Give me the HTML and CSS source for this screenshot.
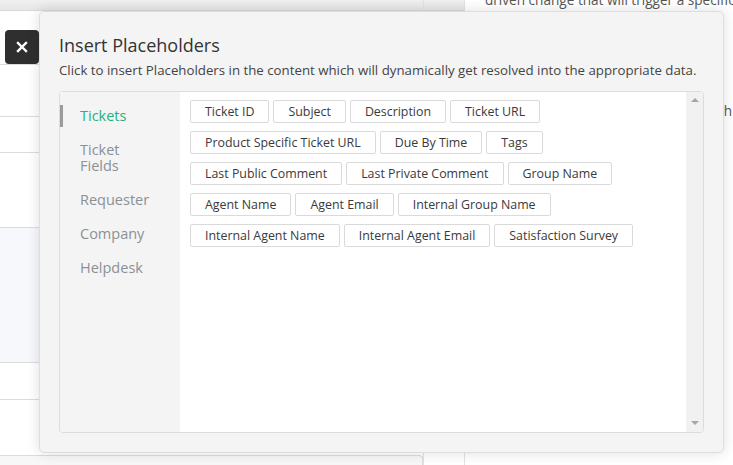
FILE: index.html
```html
<!DOCTYPE html>
<html>
<head>
<meta charset="utf-8">
<link rel="stylesheet" href="styles.css">
</head>
<body>
<div class="page">
  <div class="col-left">
    <div class="topband"></div>
    <div class="row r1"></div>
    <div class="row r2"></div>
    <div class="row r3"></div>
    <div class="row r4"></div>
    <div class="row r5 tinted"></div>
    <div class="row r6"></div>
    <div class="row r7"></div>
    <div class="bottom-box"></div>
  </div>
  <div class="col-mid">
    <div class="topband"></div>
  </div>
  <div class="col-right">
    <p class="bg-text first">driven change that will trigger a specific</p>
    <p class="bg-text second">with th</p>
  </div>
</div>

<button class="close-btn" aria-label="Close">
  <svg width="12" height="12" viewBox="0 0 12 12"><path d="M2 2 L10 10 M10 2 L2 10" stroke="#fff" stroke-width="2.4" stroke-linecap="square"/></svg>
</button>

<div class="modal">
  <h2 class="modal-title">Insert Placeholders</h2>
  <p class="modal-sub">Click to insert Placeholders in the content which will dynamically get resolved into the appropriate data.</p>
  <div class="panel">
    <ul class="tabs">
      <li class="tab active">Tickets</li>
      <li class="tab">Ticket Fields</li>
      <li class="tab">Requester</li>
      <li class="tab">Company</li>
      <li class="tab">Helpdesk</li>
    </ul>
    <div class="content">
      <div class="btn-row">
        <span class="ph">Ticket ID</span><span class="ph">Subject</span><span class="ph">Description</span><span class="ph">Ticket URL</span>
      </div>
      <div class="btn-row">
        <span class="ph">Product Specific Ticket URL</span><span class="ph">Due By Time</span><span class="ph">Tags</span>
      </div>
      <div class="btn-row">
        <span class="ph">Last Public Comment</span><span class="ph">Last Private Comment</span><span class="ph">Group Name</span>
      </div>
      <div class="btn-row">
        <span class="ph">Agent Name</span><span class="ph">Agent Email</span><span class="ph">Internal Group Name</span>
      </div>
      <div class="btn-row">
        <span class="ph">Internal Agent Name</span><span class="ph">Internal Agent Email</span><span class="ph">Satisfaction Survey</span>
      </div>
    </div>
    <div class="scrollbar">
      <span class="arrow up"></span>
      <span class="arrow down"></span>
    </div>
  </div>
</div>
</body>
</html>
```

FILE: styles.css
```css
* { box-sizing: border-box; }
html, body { margin: 0; padding: 0; }
body {
  width: 733px;
  height: 465px;
  overflow: hidden;
  background: #fff;
  font-family: "Open Sans", "Noto Sans", sans-serif;
  color: #333;
  position: relative;
}

/* background page */
.page {
  display: flex;
  height: 465px;
}
.col-left {
  width: 424px;
  display: flex;
  flex-direction: column;
  border-right: 1px solid #e2e2e2;
}
.topband {
  height: 11px;
  background: linear-gradient(#f0f0f0, #e6e6e6);
  border-bottom: 1px solid #d9d9d9;
  flex: none;
}
.row { border-bottom: 1px solid #dcdcdc; flex: none; }
.r1 { height: 54px; }
.r2 { height: 52px; }
.r3 { height: 36px; }
.r4 { height: 75px; }
.r5 { height: 135px; }
.r6 { height: 37px; }
.r7 { height: 55px; border-bottom: none; }
.tinted { background: #f6f8fb; }
.bottom-box {
  flex: 1;
  border-top: 1px solid #dcdcdc;
  border-right: 1px solid #dcdcdc;
  border-top-right-radius: 4px;
  background: #f7f7f7;
}
.col-mid {
  width: 41px;
  border-right: 1px solid #e2e2e2;
}
.col-right {
  flex: 1;
  padding-left: 20px;
  overflow: hidden;
}
.bg-text {
  margin: 0;
  font-size: 13.6px;
  line-height: 18px;
  color: #555;
  white-space: nowrap;
}
.bg-text.first { margin-top: -9px; }
.bg-text.second {
  margin-top: 93px;
  text-align: right;
  padding-right: 1px;
}

/* close button */
.close-btn {
  position: absolute;
  left: 5px;
  top: 30px;
  width: 34px;
  height: 34px;
  border: none;
  border-radius: 4px;
  background: #2f2f2f;
  display: flex;
  align-items: center;
  justify-content: center;
  padding: 0;
}

/* modal */
.modal {
  position: absolute;
  left: 39px;
  top: 11px;
  width: 685px;
  height: 442px;
  background: #f4f4f4;
  border: 1px solid #dedede;
  border-radius: 5px;
  box-shadow: 0 0 14px rgba(0, 0, 0, 0.13);
  padding: 21px 19px 19px 19px;
  display: flex;
  flex-direction: column;
}
.modal-title {
  margin: 0;
  font-size: 18px;
  font-weight: 400;
  line-height: 24px;
  color: #333;
}
.modal-sub {
  margin: 4px 0 0 0;
  font-size: 13.27px;
  line-height: 18px;
  color: #444;
}
.panel {
  margin-top: 12px;
  flex: 1;
  display: flex;
  border: 1px solid #dcdcdc;
  border-radius: 4px;
  overflow: hidden;
  background: #fff;
}
.tabs {
  list-style: none;
  margin: 0;
  padding: 13px 0 0 0;
  width: 120px;
  flex: none;
  background: #f4f4f4;
}
.tab {
  padding: 3px 20px 3px 17px;
  line-height: 16px;
  font-size: 14.5px;
  color: #8a9196;
  margin-bottom: 12px;
  border-left: 3px solid transparent;
}
.tab.active {
  color: #27b179;
  border-left-color: #9b9b9b;
}
.content {
  flex: 1;
  padding: 8px 10px;
  display: flex;
  flex-direction: column;
  gap: 8px;
}
.btn-row {
  display: flex;
  gap: 4px;
}
.ph {
  display: inline-block;
  height: 23px;
  line-height: 21px;
  padding: 0 14px;
  border: 1px solid #dadada;
  border-radius: 2px;
  background: #fff;
  font-size: 12.4px;
  color: #3a3a3a;
  white-space: nowrap;
}
.scrollbar {
  width: 17px;
  flex: none;
  background: #f1f1f1;
  display: flex;
  flex-direction: column;
  justify-content: space-between;
  align-items: center;
  padding: 6px 0 7px 0;
}
.arrow {
  width: 0;
  height: 0;
  border-left: 4px solid transparent;
  border-right: 4px solid transparent;
}
.arrow.up { border-bottom: 4px solid #a6a6a6; }
.arrow.down { border-top: 4px solid #a6a6a6; }
```
